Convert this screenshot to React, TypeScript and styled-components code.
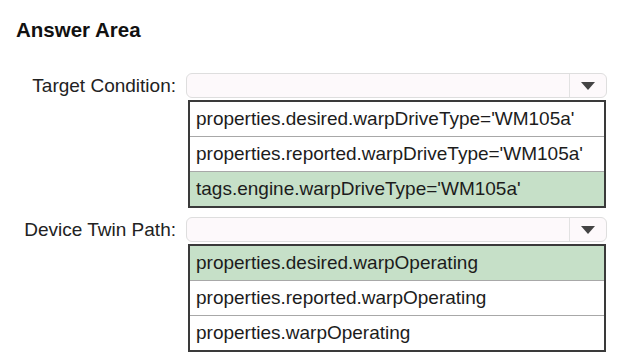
import React from 'react';
import styled, { createGlobalStyle } from 'styled-components';

const GlobalStyle = createGlobalStyle`
  html, body {
    margin: 0;
    padding: 0;
    background: #ffffff;
  }
  body {
    font-family: "Liberation Sans", Arial, sans-serif;
    color: #1a1a1a;
  }
`;

const Page = styled.div`
  width: 625px;
  height: 364px;
  padding: 20px 0 0 0;
  box-sizing: border-box;
  overflow: hidden;
`;

const Title = styled.h2`
  margin: 0 0 0 16px;
  font-size: 20.5px;
  font-weight: 700;
  line-height: 20px;
  color: #111;
`;

const Form = styled.div`
  display: grid;
  grid-template-columns: 176px 421px;
  column-gap: 10px;
  row-gap: 9px;
  margin-top: 33px;
`;

const Label = styled.div`
  font-size: 19px;
  text-align: right;
  height: 25px;
  line-height: 25px;
  color: #222;
`;

const Control = styled.div`
  display: flex;
  flex-direction: column;
`;

const Select = styled.div`
  display: flex;
  height: 25px;
  box-sizing: border-box;
  border: 1px solid #dedede;
  border-radius: 6px;
  background: #fdf9fb;
`;

const SelectValue = styled.div`
  flex: 1;
`;

const ArrowBox = styled.div`
  width: 36px;
  border-left: 1px solid #e2e2e2;
  display: flex;
  align-items: center;
  justify-content: center;
`;

const Arrow = styled.div`
  width: 0;
  height: 0;
  border-left: 7px solid transparent;
  border-right: 7px solid transparent;
  border-top: 8px solid #444;
`;

const List = styled.div`
  margin: 2px 0 0 2px;
  width: 418px;
  box-sizing: border-box;
  border: 2px solid #3a3a3a;
  background: #fff;
`;

const Option = styled.div<{ $selected?: boolean }>`
  height: 34px;
  line-height: 34px;
  padding-left: 6px;
  font-size: 19px;
  color: #1c1c1c;
  background: ${p => (p.$selected ? '#c6e0c8' : '#ffffff')};
  & + & {
    border-top: 1px solid #a8a8a8;
  }
`;

interface Field {
  label: string;
  options: string[];
  selected: number;
}

const fields: Field[] = [
  {
    label: 'Target Condition:',
    options: [
      "properties.desired.warpDriveType='WM105a'",
      "properties.reported.warpDriveType='WM105a'",
      "tags.engine.warpDriveType='WM105a'",
    ],
    selected: 2,
  },
  {
    label: 'Device Twin Path:',
    options: [
      'properties.desired.warpOperating',
      'properties.reported.warpOperating',
      'properties.warpOperating',
    ],
    selected: 0,
  },
];

export default function App() {
  return (
    <>
      <GlobalStyle />
      <Page>
        <Title>Answer Area</Title>
        <Form>
          {fields.map(f => (
            <React.Fragment key={f.label}>
              <Label>{f.label}</Label>
              <Control>
                <Select>
                  <SelectValue />
                  <ArrowBox>
                    <Arrow />
                  </ArrowBox>
                </Select>
                <List>
                  {f.options.map((o, i) => (
                    <Option key={o} $selected={i === f.selected}>
                      {o}
                    </Option>
                  ))}
                </List>
              </Control>
            </React.Fragment>
          ))}
        </Form>
      </Page>
    </>
  );
}
